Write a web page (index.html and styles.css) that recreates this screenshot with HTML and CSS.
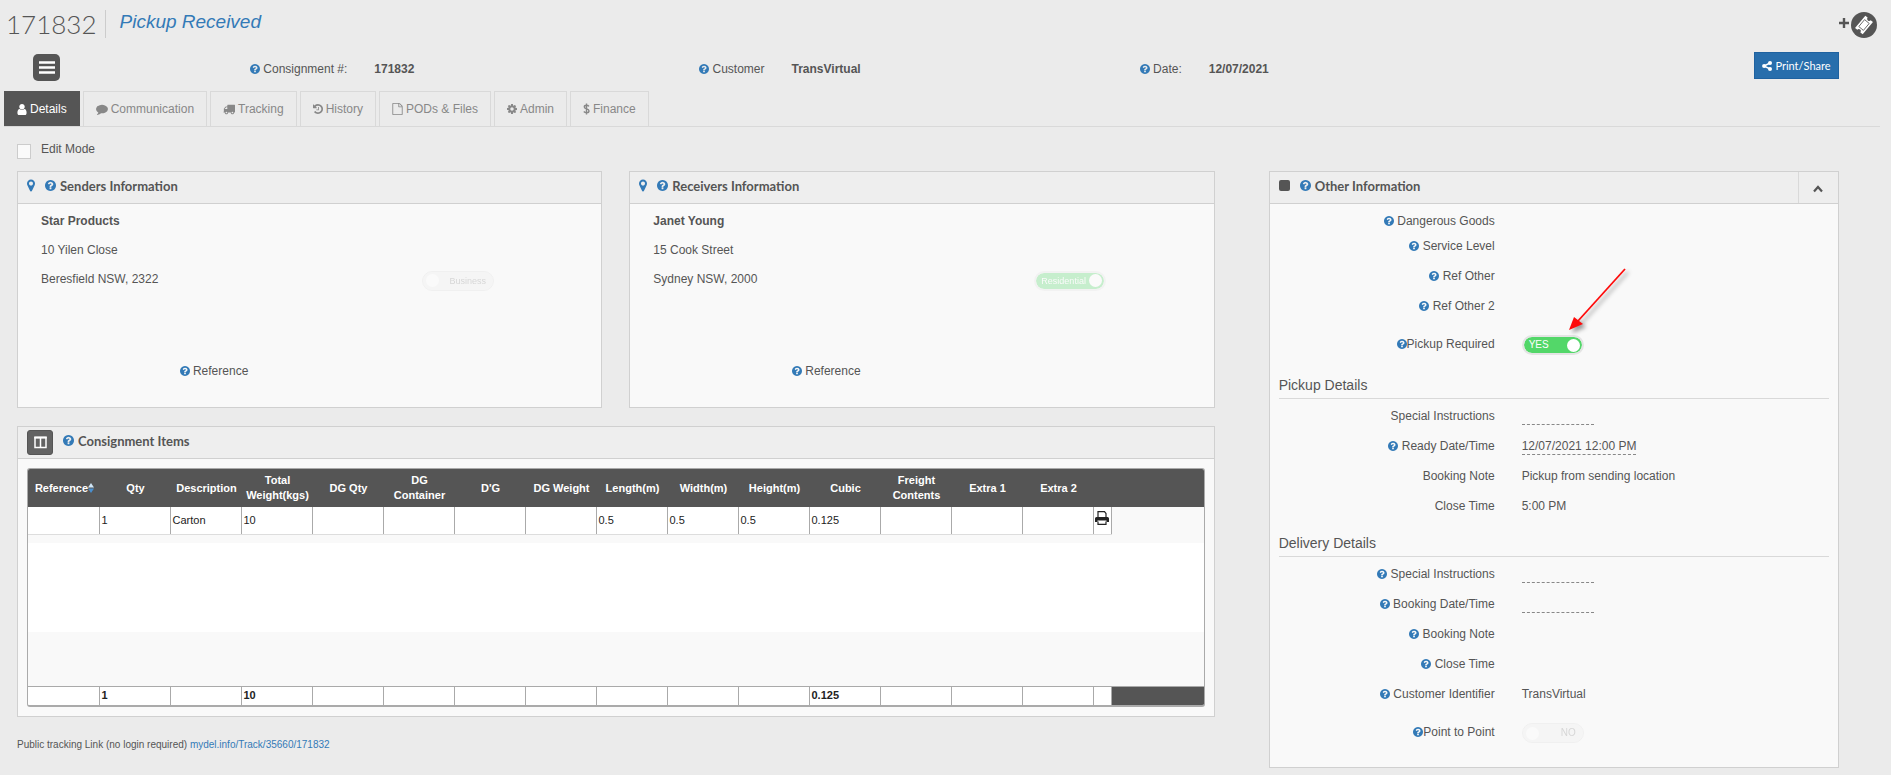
FILE: index.html
```html
<!DOCTYPE html>
<html lang="en">
<head>
    <meta charset="UTF-8">
    <meta name="viewport" content="width=device-width, initial-scale=1.0">
    <title>Consignment 171832</title>
    <link rel="stylesheet" href="styles.css">
</head>
<body>
    <!-- icon sprite -->
    <svg class="sprite" aria-hidden="true">
        <symbol id="help" viewBox="128 128 1536 1536"><path d="M1024 1376v-192q0-14-9-23t-23-9h-192q-14 0-23 9t-9 23v192q0 14 9 23t23 9h192q14 0 23-9t9-23zm256-672q0-88-55.5-163t-138.5-116-170-41q-243 0-371 213-15 24 8 42l132 100q7 6 19 6 16 0 25-12 53-68 86-92 34-24 86-24 48 0 85.5 26t37.5 59q0 38-20 61t-68 45q-63 28-115.5 86.5t-52.5 125.5v36q0 14 9 23t23 9h192q14 0 23-9t9-23q0-19 21.5-49.5t54.5-49.5q32-18 49-28.5t46-35 44.5-48 28-60.5 12.5-81zm384 192q0 209-103 385.5t-279.5 279.5-385.5 103-385.5-103-279.5-279.5-103-385.5 103-385.5 279.5-279.5 385.5-103 385.5 103 279.5 279.5 103 385.5z"/></symbol>
        <symbol id="marker" viewBox="384 128 1024 1536"><path d="M1152 640q0-106-75-181t-181-75-181 75-75 181 75 181 181 75 181-75 75-181zm256 0q0 109-33 179l-364 774q-16 33-47.5 52t-67.5 19-67.5-19-46.5-52l-365-774q-33-70-33-179 0-212 150-362t362-150 362 150 150 362z"/></symbol>
        <symbol id="user" viewBox="256 128 1280 1536"><path d="M1536 1399q0 109-62.5 187t-150.5 78h-854q-88 0-150.5-78t-62.5-187q0-85 8.5-160.5t31.5-152 58.5-131 94-89 134.5-34.5q131 128 313 128t313-128q76 0 134.5 34.5t94 89 58.5 131 31.5 152 8.5 160.5zm-256-887q0 159-112.5 271.5t-271.5 112.5-271.5-112.5-112.5-271.5 112.5-271.5 271.5-112.5 271.5 112.5 112.5 271.5z"/></symbol>
        <symbol id="comment" viewBox="0 128 1792 1664"><path d="M1792 896q0 174-120 321.5t-326 233-450 85.5q-70 0-145-8-198 175-460 242-49 14-114 22-17 2-30.5-9t-17.5-29v-1q-3-4-.5-12t2-10 4.5-9.5l6-9 7-8.5 8-9q7-8 31-34.5t34.5-38 31-39.5 32.5-51 27-59 26-76q-157-89-247.5-220t-90.5-281q0-130 71-248.5t191-204.5 286-136.5 348-50.5q244 0 450 85.5t326 233 120 321.5z"/></symbol>
        <symbol id="truck" viewBox="0 192 1792 1536"><path d="M640 1408q0-52-38-90t-90-38-90 38-38 90 38 90 90 38 90-38 38-90zm-384-512h384v-256h-158q-13 0-22 9l-195 195q-9 9-9 22v30zm1280 512q0-52-38-90t-90-38-90 38-38 90 38 90 90 38 90-38 38-90zm256-1088v1024q0 15-4 26.5t-13.5 18.5-16.5 11.5-23.5 6-22.5 2-25.5 0-22.5-.5q0 106-75 181t-181 75-181-75-75-181h-384q0 106-75 181t-181 75-181-75-75-181h-64q-3 0-22.5.5t-25.5 0-22.5-2-23.5-6-16.5-11.5-13.5-18.5-4-26.5q0-26 19-45t45-19v-320q0-8-.5-35t0-38 2.5-34.5 6.5-37 14-30.5 22.5-30l198-198q19-19 50.5-32t58.5-13h160v-192q0-26 19-45t45-19h1024q26 0 45 19t19 45z"/></symbol>
        <symbol id="history" viewBox="128 128 1536 1536"><path d="M1664 896q0 156-61 298t-164 245-245 164-298 61q-172 0-327-72.5t-264-204.5q-7-10-6.5-22.5t8.5-20.5l137-138q10-9 25-9 16 2 23 12 73 95 179 147t225 52q104 0 198.5-40.5t163.5-109.5 109.5-163.5 40.5-198.5-40.5-198.5-109.5-163.5-163.5-109.5-198.5-40.5q-98 0-188 35.5t-160 101.5l137 138q31 30 14 69-17 40-59 40h-448q-26 0-45-19t-19-45v-448q0-42 40-59 39-17 69 14l130 129q107-101 244.5-156.5t284.5-55.5q156 0 298 61t245 164 164 245 61 298zm-640-288v448q0 14-9 23t-23 9h-320q-14 0-23-9t-9-23v-64q0-14 9-23t23-9h224v-352q0-14 9-23t23-9h64q14 0 23 9t9 23z"/></symbol>
        <symbol id="file" viewBox="128 0 1536 1792"><path d="M1596 380q28 28 48 76t20 88v1152q0 40-28 68t-68 28h-1344q-40 0-68-28t-28-68v-1600q0-40 28-68t68-28h896q40 0 88 20t76 48zm-444-244v376h376q-10-29-22-41l-313-313q-12-12-41-22zm384 1528v-1024h-416q-40 0-68-28t-28-68v-416h-768v1536h1280z"/></symbol>
        <symbol id="cog" viewBox="128 128 1536 1536"><path d="M1152 896q0-106-75-181t-181-75-181 75-75 181 75 181 181 75 181-75 75-181zm512-109v222q0 12-8 23t-20 13l-185 28q-19 54-39 91 35 50 107 138 10 12 10 25t-9 23q-27 37-99 108t-94 71q-12 0-26-9l-138-108q-44 23-91 38-16 136-29 186-7 28-36 28h-222q-14 0-24.5-8.5t-11.5-21.5l-28-184q-49-16-90-37l-141 107q-10 9-25 9-14 0-25-11-126-114-165-168-7-10-7-23 0-12 8-23 15-21 51-66.5t54-70.5q-27-50-41-99l-183-27q-13-2-21-12.5t-8-23.5v-222q0-12 8-23t19-13l186-28q14-46 39-92-40-57-107-138-10-12-10-24 0-10 9-23 26-36 98.5-107.5t94.5-71.5q13 0 26 10l138 107q44-23 91-38 16-136 29-186 7-28 36-28h222q14 0 24.5 8.5t11.5 21.5l28 184q49 16 90 37l142-107q9-9 24-9 13 0 25 10 129 119 165 170 7 8 7 22 0 12-8 23-15 21-51 66.5t-54 70.5q26 50 41 98l183 28q13 2 21 12.5t8 23.5z"/></symbol>
        <symbol id="dollar" viewBox="0 0 7 12"><path d="M6 3.4C5.3 2.6 4.500 2.300 3.500 2.300 2.200 2.300 1.300 3 1.300 4c0 2.500 4.700 1.300 4.700 3.900 0 1.100-1 1.800-2.500 1.800-1.100 0-2-.4-2.700-1.200M3.500.4v11.200" fill="none" stroke="currentColor" stroke-width="1.400"/></symbol>
        <symbol id="share" viewBox="0 0 10 10"><path d="M8 2 2 5l6 3" fill="none" stroke="currentColor" stroke-width="1.400"/><circle cx="8" cy="2" r="2"/><circle cx="2.100" cy="5" r="2"/><circle cx="8" cy="8" r="2"/></symbol>
    </svg>

    <header class="topbar">
        <h1 class="topbar-id">171832</h1>
        <span class="topbar-status">Pickup Received</span>
        <button class="ticket-button" aria-label="Add ticket">
            <svg width="10" height="14" viewBox="0 0 10 14"><path d="M5 0v10M0 5h10" stroke="#555" stroke-width="2.400"/></svg>
            <svg width="26" height="26" viewBox="0 0 26 26"><circle cx="13" cy="13" r="13" fill="#555"/><g transform="rotate(-50 13 13)"><path d="M5 8h16v3a2 2 0 0 0 0 4v3H5v-3a2 2 0 0 0 0-4z" fill="#fff"/><path d="M8.500 10h9v6h-9z" fill="none" stroke="#555" stroke-width=".8"/></g></svg>
        </button>
    </header>

    <section class="summary">
        <button class="menu-button" aria-label="Menu">
            <svg width="16" height="13" viewBox="0 0 16 13"><path d="M0 1.500h16M0 6.500h16M0 11.500h16" stroke="#fff" stroke-width="2.400"/></svg>
        </button>
        <dl class="summary-list">
            <div class="summary-item"><dt><svg class="help"><use href="#help"/></svg> Consignment #:</dt><dd>171832</dd></div>
            <div class="summary-item"><dt><svg class="help"><use href="#help"/></svg> Customer</dt><dd>TransVirtual</dd></div>
            <div class="summary-item"><dt><svg class="help"><use href="#help"/></svg> Date:</dt><dd>12/07/2021</dd></div>
        </dl>
        <button class="print-button"><svg width="10" height="10"><use href="#share"/></svg>Print/Share</button>
    </section>

    <nav class="tabs">
        <a class="tab active" href="#"><svg width="10" height="11"><use href="#user"/></svg>Details</a>
        <a class="tab" href="#"><svg width="12" height="11"><use href="#comment"/></svg>Communication</a>
        <a class="tab" href="#"><svg width="12" height="11"><use href="#truck"/></svg>Tracking</a>
        <a class="tab" href="#"><svg width="10" height="10"><use href="#history"/></svg>History</a>
        <a class="tab" href="#"><svg width="11" height="12"><use href="#file"/></svg>PODs &amp; Files</a>
        <a class="tab" href="#"><svg width="10" height="10"><use href="#cog"/></svg>Admin</a>
        <a class="tab" href="#"><svg width="7" height="12"><use href="#dollar"/></svg>Finance</a>
    </nav>

    <label class="edit-mode"><input type="checkbox">Edit Mode</label>

    <main class="content">
        <div class="main-column">
            <div class="parties">
                <section class="panel">
                    <h2 class="panel-title"><svg class="marker"><use href="#marker"/></svg><svg class="help"><use href="#help"/></svg>Senders Information</h2>
                    <div class="party">
                        <div class="party-row"><strong>Star Products</strong></div>
                        <div class="party-row">10 Yilen Close</div>
                        <div class="party-row">
                            <span>Beresfield NSW, 2322</span>
                            <label class="toggle toggle-wide disabled"><input type="checkbox" disabled><span>Business</span></label>
                        </div>
                        <div class="party-reference"><svg class="help"><use href="#help"/></svg> Reference</div>
                    </div>
                </section>
                <section class="panel">
                    <h2 class="panel-title"><svg class="marker"><use href="#marker"/></svg><svg class="help"><use href="#help"/></svg>Receivers Information</h2>
                    <div class="party">
                        <div class="party-row"><strong>Janet Young</strong></div>
                        <div class="party-row">15 Cook Street</div>
                        <div class="party-row">
                            <span>Sydney NSW, 2000</span>
                            <label class="toggle toggle-wide on disabled"><input type="checkbox" checked disabled><span>Residential</span></label>
                        </div>
                        <div class="party-reference"><svg class="help"><use href="#help"/></svg> Reference</div>
                    </div>
                </section>
            </div>

            <section class="panel">
                <h2 class="panel-title">
                    <button class="columns-button" aria-label="Choose columns"><svg width="13" height="13" viewBox="0 0 13 13"><path d="M1 1.500h11v10H1zM6.500 2v9" fill="none" stroke="#fff" stroke-width="1.500"/><path d="M.3 1.500h12.400" stroke="#fff" stroke-width="2"/></svg></button>
                    <svg class="help"><use href="#help"/></svg>Consignment Items
                </h2>
                <div class="items">
                    <table class="items-table">
                        <colgroup><col span="15" class="col-data"><col class="col-print"><col></colgroup>
                        <thead>
                            <tr>
                                <th><span class="sortable">Reference<svg width="6" height="10" viewBox="0 0 6 10"><path d="M3 0l3 4.500H0z" fill="#cfe6f7"/><path d="M0 5.500h6L3 10z" fill="#4a90d0"/></svg></span></th>
                                <th>Qty</th><th>Description</th><th>Total Weight(kgs)</th><th>DG Qty</th><th>DG Container</th><th>D'G</th><th>DG Weight</th><th>Length(m)</th><th>Width(m)</th><th>Height(m)</th><th>Cubic</th><th>Freight Contents</th><th>Extra 1</th><th>Extra 2</th><th></th><th></th>
                            </tr>
                        </thead>
                        <tbody>
                            <tr>
                                <td></td><td>1</td><td>Carton</td><td>10</td><td></td><td></td><td></td><td></td><td>0.5</td><td>0.5</td><td>0.5</td><td>0.125</td><td></td><td></td><td></td>
                                <td class="print-cell"><button class="row-print" aria-label="Print item"><svg width="14" height="14" viewBox="0 0 14 14"><path d="M3 6V.7h6.500L11 2.500V6M3 10.500v2.800h8v-2.800" fill="#fff" stroke="#222" stroke-width="1.200"/><path d="M0 7.500Q0 6 1.500 6h11Q14 6 14 7.500V11h-2.500V9.500h-9V11H0z" fill="#222"/></svg></button></td>
                                <td class="blank"></td>
                            </tr>
                        </tbody>
                    </table>
                    <div class="items-space"></div>
                    <table class="items-table items-total">
                        <colgroup><col span="15" class="col-data"><col class="col-print"><col></colgroup>
                        <tbody>
                            <tr><td></td><td>1</td><td></td><td>10</td><td></td><td></td><td></td><td></td><td></td><td></td><td></td><td>0.125</td><td></td><td></td><td></td><td></td><td class="blank"></td></tr>
                        </tbody>
                    </table>
                </div>
            </section>

            <p class="tracking-link">Public tracking Link (no login required) <a href="#">mydel.info/Track/35660/171832</a></p>
        </div>

        <section class="panel">
            <h2 class="panel-title">
                <span class="square"></span><svg class="help"><use href="#help"/></svg>Other Information
                <button class="collapse-button" aria-label="Collapse"><svg width="10" height="8" viewBox="0 0 10 8"><path d="M1 6.500l4-4.500 4 4.500" fill="none" stroke="#555" stroke-width="2.200"/></svg></button>
            </h2>
            <div class="other">
                <div class="field short"><span class="field-name"><svg class="help"><use href="#help"/></svg> Dangerous Goods</span></div>
                <div class="field"><span class="field-name"><svg class="help"><use href="#help"/></svg> Service Level</span></div>
                <div class="field"><span class="field-name"><svg class="help"><use href="#help"/></svg> Ref Other</span></div>
                <div class="field"><span class="field-name"><svg class="help"><use href="#help"/></svg> Ref Other 2</span></div>
                <div class="field tall">
                    <label class="field-name" for="pickup"><svg class="help"><use href="#help"/></svg>Pickup Required</label>
                    <div class="field-value">
                        <span class="toggle on"><input type="checkbox" id="pickup" checked><span>YES</span></span>
                        <svg class="arrow" width="66" height="70" viewBox="0 0 66 70">
                            <path d="M58 2 11 54" stroke="#fe0b0b" stroke-width="1.800"/>
                            <path d="M2 63 7 50l9 7z" fill="#fe0b0b"/>
                        </svg>
                    </div>
                </div>

                <h3 class="group-title">Pickup Details</h3>
                <div class="field"><span class="field-name">Special Instructions</span><a class="editable" href="#" aria-label="Edit special instructions"></a></div>
                <div class="field"><span class="field-name"><svg class="help"><use href="#help"/></svg> Ready Date/Time</span><a class="editable" href="#">12/07/2021 12:00 PM</a></div>
                <div class="field"><span class="field-name">Booking Note</span><span>Pickup from sending location</span></div>
                <div class="field"><span class="field-name">Close Time</span><span>5:00 PM</span></div>

                <h3 class="group-title">Delivery Details</h3>
                <div class="field"><span class="field-name"><svg class="help"><use href="#help"/></svg> Special Instructions</span><a class="editable" href="#" aria-label="Edit special instructions"></a></div>
                <div class="field"><span class="field-name"><svg class="help"><use href="#help"/></svg> Booking Date/Time</span><a class="editable" href="#" aria-label="Edit booking date"></a></div>
                <div class="field"><span class="field-name"><svg class="help"><use href="#help"/></svg> Booking Note</span></div>
                <div class="field"><span class="field-name"><svg class="help"><use href="#help"/></svg> Close Time</span></div>
                <div class="field"><span class="field-name"><svg class="help"><use href="#help"/></svg> Customer Identifier</span><span>TransVirtual</span></div>
                <div class="field tall">
                    <label class="field-name" for="point"><svg class="help"><use href="#help"/></svg>Point to Point</label>
                    <div class="field-value"><span class="toggle disabled"><input type="checkbox" id="point" disabled><span>NO</span></span></div>
                </div>
            </div>
        </section>
    </main>
</body>
</html>
```

FILE: styles.css
```css
* {
    box-sizing: border-box;
}
body {
    margin: 0;
    background: #ebebeb;
    color: #555;
    font-family: "Liberation Sans", Arial, sans-serif;
    font-size: 12px;
    line-height: 16px;
}
h1, h2, h3, p, dl, dd {
    margin: 0;
}
button {
    padding: 0;
    border: none;
    background: none;
    font: inherit;
    cursor: pointer;
}
a {
    color: #337ab7;
    text-decoration: none;
}
svg {
    fill: currentColor;
}
.sprite {
    display: none;
}
.help {
    width: 10px;
    height: 10px;
    color: #337ab7;
    vertical-align: -1px;
}

/* Top bar */
.topbar {
    display: flex;
    align-items: flex-start;
    height: 48px;
    padding: 10px 14px 0 6px;
}
.topbar-id {
    height: 28px;
    padding-right: 9px;
    border-right: 1px solid #ccc;
    font-family: Lato, sans-serif;
    font-size: 26px;
    font-weight: 300;
    line-height: 28px;
}
.topbar-status {
    margin-left: 13px;
    color: #337ab7;
    font-size: 19px;
    font-style: italic;
    line-height: 24px;
}
.ticket-button {
    display: flex;
    align-items: center;
    gap: 2px;
    margin: 2px 0 0 auto;
}

/* Summary line */
.summary {
    display: flex;
    align-items: flex-start;
    height: 43px;
    padding: 4px 52px 0 33px;
}
.menu-button {
    display: flex;
    align-items: center;
    justify-content: center;
    width: 27px;
    height: 27px;
    margin-top: 2px;
    border-radius: 5px;
    background: #555;
}
.summary-list {
    display: flex;
    width: 69.3%;
    margin: 9px auto 0 12px;
}
.summary-item {
    display: flex;
    flex: 1;
    gap: 27px;
}
.summary-item dt {
    width: 66%;
    text-align: right;
}
.summary-item dd {
    font-weight: bold;
}
.print-button {
    display: flex;
    align-items: center;
    justify-content: center;
    gap: 3px;
    width: 85px;
    height: 27px;
    border: 1px solid #1f62a0;
    background: #286eac;
    color: #fff;
    font-family: Lato, sans-serif;
    font-size: 11px;
}

/* Tabs */
.tabs {
    display: flex;
    gap: 3px;
    margin: 0 11px 0 4px;
    border-bottom: 1px solid #d9d9d9;
}
.tab {
    display: flex;
    align-items: center;
    gap: 3px;
    height: 35px;
    padding: 0 12px;
    border: 1px solid #d9d9d9;
    border-bottom: none;
    color: #888;
}
.tab.active {
    border-color: #555;
    background: #555;
    color: #fff;
}

.edit-mode {
    display: flex;
    align-items: flex-start;
    gap: 10px;
    width: max-content;
    margin: 14px 0 0 17px;
}
.edit-mode input {
    appearance: none;
    width: 14px;
    height: 15px;
    margin: 3px 0 0;
    border: 1px solid #ccc;
    background: #fafafa;
}

/* Panels */
.content {
    display: grid;
    grid-template-columns: 21fr 10fr;
    align-items: start;
    gap: 54px;
    padding: 12px 52px 0 17px;
}
.main-column {
    display: grid;
    gap: 18px;
}
.parties {
    display: grid;
    grid-template-columns: 1fr 1fr;
    gap: 27px;
}
.panel {
    min-width: 0;
    border: 1px solid #d0d0d0;
    background: #f9f9f9;
}
.panel-title {
    display: flex;
    align-items: center;
    gap: 4px;
    height: 32px;
    padding: 0 0 4px 9px;
    border-bottom: 1px solid #d0d0d0;
    background: #eee;
    font-family: Lato, sans-serif;
    font-size: 13px;
    font-weight: bold;
}
.panel-title .help {
    width: 11px;
    height: 11px;
}
.marker {
    width: 8px;
    height: 13px;
    margin-right: 6px;
    color: #337ab7;
}
.square {
    width: 11px;
    height: 11px;
    margin-right: 6px;
    border-radius: 2px;
    background: #555;
}
.collapse-button {
    align-self: stretch;
    width: 40px;
    margin: 0 0 -4px auto;
    border-left: 1px solid #d9d9d9;
}
.columns-button {
    display: flex;
    align-items: center;
    justify-content: center;
    width: 26px;
    height: 25px;
    margin: 0 6px -4px 0;
    border: 1px solid #555;
    border-radius: 3px;
    background: #636363;
}

/* Sender and receiver */
.party {
    padding: 2px 0 21px 23px;
}
.party-row {
    display: grid;
    grid-template-columns: 68% 32%;
    align-items: center;
    height: 29px;
}
.party-reference {
    width: 37%;
    margin-top: 63px;
    line-height: 30px;
    text-align: right;
}

/* Toggles: the checkbox itself is the knob */
.toggle {
    display: flex;
    align-items: center;
    justify-content: space-between;
    width: 62px;
    height: 20px;
    padding: 0 7px 0 3px;
    border: 1px solid #ddd;
    border-radius: 10px;
    background: #eee;
    color: #888;
    font-size: 10px;
    line-height: 14px;
}
.toggle input {
    appearance: none;
    flex: none;
    width: 13px;
    height: 13px;
    margin: 0;
    border-radius: 50%;
    background: #fff;
}
.toggle.on {
    flex-direction: row-reverse;
    padding: 0 2px 0 5px;
    border: 2px solid #e4e4e4;
    background: #53d769;
    background-clip: padding-box;
    color: #fff;
}
.toggle.disabled {
    opacity: 0.3;
}
.toggle-wide {
    width: 72px;
    margin-top: 4px;
    font-size: 9px;
}

/* Consignment items */
.items {
    margin: 9px;
    border: 1px solid #aaa;
    border-bottom-width: 2px;
    border-radius: 3px;
    overflow: hidden;
}
.items-table {
    width: 100%;
    border-collapse: collapse;
    table-layout: fixed;
    color: #222;
    font-size: 11px;
    line-height: 15px;
}
.col-data {
    width: 71px;
}
.col-print {
    width: 18px;
}
.items-table th {
    height: 38px;
    padding: 0 2px 0 4px;
    background: #555;
    color: #fff;
}
.sortable {
    display: inline-flex;
    align-items: center;
}
.items-table td {
    height: 27px;
    padding: 0 2px;
    border-right: 1px solid #aaa;
    border-bottom: 1px solid #ddd;
    background: #fff;
}
.items-table td.print-cell {
    padding: 0 1px;
}
.row-print {
    display: block;
}
.items-table td.blank {
    border: none;
    background: #f9f9f9;
}
.items-space {
    height: 152px;
    border-bottom: 1px solid #aaa;
    background: #fff;
    box-shadow: inset 0 8px #f9f9f9, inset 0 -54px #f9f9f9;
}
.items-total td {
    height: 18px;
    border-bottom: none;
    font-weight: bold;
}
.items-total td.blank {
    background: #555;
}
.tracking-link {
    padding-top: 2px;
    font-size: 10px;
}

/* Other information */
.other {
    padding: 7px 9px 12px;
}
.field {
    display: grid;
    grid-template-columns: 216px 1fr;
    align-items: center;
    gap: 27px;
    height: 30px;
}
.field.short {
    height: 20px;
}
.field.tall {
    height: 46px;
}
.field-name {
    text-align: right;
}
.field-value {
    position: relative;
    padding-top: 2px;
}
.arrow {
    position: absolute;
    left: 45px;
    bottom: 18px;
    filter: drop-shadow(3px 3px 2px rgba(0, 0, 0, 0.4));
}
.editable {
    justify-self: start;
    min-width: 72px;
    height: 17px;
    border-bottom: 1px dashed #888;
    color: #555;
}
.group-title {
    height: 32px;
    margin: 4px 0 2px;
    padding-top: 10px;
    border-bottom: 1px solid #d9d9d9;
    font-size: 14px;
    font-weight: normal;
}
.tall + .group-title {
    margin-top: 0;
}
```
